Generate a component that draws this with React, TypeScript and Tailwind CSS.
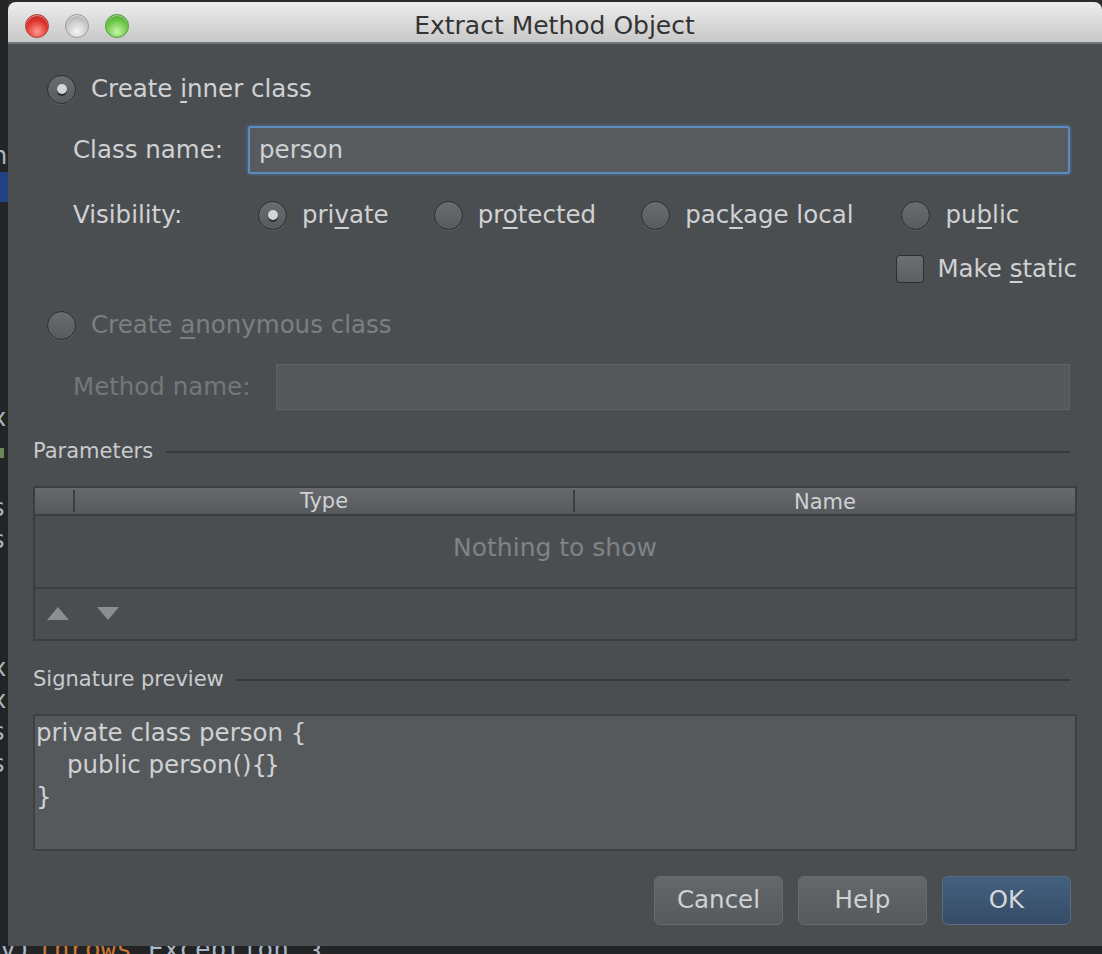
import React from 'react'

const font = "font-['DejaVu_Sans',sans-serif]"

function Radio({ checked = false }: { checked?: boolean }) {
  return (
    <span className="flex h-[29px] w-[29px] shrink-0 items-center justify-center rounded-full border border-[#2c2e30] bg-gradient-to-b from-[#6a6d70] to-[#585b5e] shadow-[0_1px_0_#5a5d60]">
      {checked && (
        <span className="h-[10px] w-[10px] rounded-full bg-[#d4d5d6] shadow-[0_2px_0_0_#2a2b2c]" />
      )}
    </span>
  )
}

function Mn({ children }: { children: React.ReactNode }) {
  return (
    <span className="underline decoration-[2px] underline-offset-[4px]">
      {children}
    </span>
  )
}

function SectionTitle({ title, lineFrom }: { title: string; lineFrom: string }) {
  return (
    <div className="flex h-[30px] items-center pr-[7px]">
      <span className="text-[21px] text-[#c9cbcd]">{title}</span>
      <span className={`${lineFrom} h-[2px] flex-1 bg-[#36383a]`} />
    </div>
  )
}

function Button({ label, primary = false }: { label: string; primary?: boolean }) {
  return (
    <button
      className={
        primary
          ? 'flex h-[49px] w-[129px] items-center justify-center rounded-[6px] border border-[#586b82] bg-gradient-to-b from-[#43607f] to-[#364c67] text-[24.5px] text-[#d6d8da]'
          : 'flex h-[49px] w-[129px] items-center justify-center rounded-[6px] border border-[#686b6e] bg-gradient-to-b from-[#64686b] to-[#575a5d] text-[24.5px] text-[#cfd1d3]'
      }
    >
      {label}
    </button>
  )
}

function Arrow({ up }: { up?: boolean }) {
  return (
    <svg width="22" height="13" viewBox="0 0 22 13">
      <path d={up ? 'M0 13 L11 0 L22 13 Z' : 'M0 0 L22 0 L11 13 Z'} fill="#8c8e90" />
    </svg>
  )
}

export default function App() {
  return (
    <div className={`${font} flex h-[954px] w-[1102px] flex-col overflow-hidden bg-[#2b2b2b]`}>
      <div className="flex h-[946px]">
        {/* editor strip behind the dialog */}
        <div className="flex w-[8px] shrink-0 flex-col overflow-hidden bg-[#232425] pt-[140px] text-[24px] leading-[32px] text-[#a9b7c6]">
          <div className="-ml-[8px]">n</div>
          <div className="h-[30px] w-[8px] bg-[#214283]" />
          <div className="h-[200px]" />
          <div className="-ml-[8px]">x</div>
          <div className="mt-[14px] h-[10px] w-[4px] bg-[#6a8759]" />
          <div className="mt-[34px] -ml-[8px]">s</div>
          <div className="-ml-[8px]">s</div>
          <div className="h-[96px]" />
          <div className="-ml-[8px]">x</div>
          <div className="-ml-[8px]">x</div>
          <div className="-ml-[8px]">s</div>
          <div className="-ml-[8px]">s</div>
          <div className="-ml-[8px]">)</div>
        </div>

        {/* dialog window */}
        <div className="mt-[2px] flex flex-1 flex-col overflow-hidden rounded-t-[8px] bg-[#4b4e51]">
          {/* title bar */}
          <div className="flex h-[42px] shrink-0 items-center border-b-2 border-[#777777] bg-gradient-to-b from-[#ededed] to-[#c8c8c8] pt-[7px]">
            <div className="flex gap-[16px] pl-[17px]">
              <span className="h-[24px] w-[24px] rounded-full border border-[#b23a35] bg-[radial-gradient(circle_at_50%_75%,#ff9b92,#e0342c_55%,#a8201a)] shadow-[inset_0_1px_1px_rgba(255,255,255,0.6)]" />
              <span className="h-[24px] w-[24px] rounded-full border border-[#9a9a9a] bg-[radial-gradient(circle_at_50%_75%,#f5f5f5,#c9c9c9_55%,#9d9d9d)] shadow-[inset_0_1px_1px_rgba(255,255,255,0.7)]" />
              <span className="h-[24px] w-[24px] rounded-full border border-[#4f9a35] bg-[radial-gradient(circle_at_50%_75%,#c8f5a8,#6cc846_55%,#3f8f25)] shadow-[inset_0_1px_1px_rgba(255,255,255,0.6)]" />
            </div>
            <span className="flex-1 pr-[122px] text-center text-[25px] text-[#333333]">
              Extract Method Object
            </span>
          </div>

          {/* body */}
          <div className="flex flex-1 flex-col px-[25px] text-[24.5px] text-[#cfd1d3]">
            {/* create inner class */}
            <div className="mt-[31px] flex h-[28px] items-center gap-[15px] pl-[14px]">
              <Radio checked />
              <span>
                Create <Mn>i</Mn>nner class
              </span>
            </div>

            <div className="mt-[23px] flex h-[48px] items-center pl-[40px] pr-[7px]">
              <span className="w-[175px] shrink-0">Class name:</span>
              <div className="flex h-[48px] flex-1 items-center rounded-[3px] border-2 border-[#5a8cc0] bg-[#585b5e] pl-[9px] shadow-[0_0_3px_1px_rgba(90,140,192,0.45)]">
                person
              </div>
            </div>

            <div className="mt-[26px] flex h-[30px] items-center pl-[40px]">
              <span className="w-[185px] shrink-0">Visibility:</span>
              <div className="flex items-center gap-[15px]">
                <Radio checked />
                <span>
                  pri<Mn>v</Mn>ate
                </span>
              </div>
              <div className="ml-[45px] flex items-center gap-[15px]">
                <Radio />
                <span>
                  pr<Mn>o</Mn>tected
                </span>
              </div>
              <div className="ml-[45px] flex items-center gap-[15px]">
                <Radio />
                <span>
                  pac<Mn>k</Mn>age local
                </span>
              </div>
              <div className="ml-[48px] flex items-center gap-[15px]">
                <Radio />
                <span>
                  pu<Mn>b</Mn>lic
                </span>
              </div>
            </div>

            <div className="mt-[25px] flex h-[28px] items-center justify-end gap-[13px]">
              <span className="h-[28px] w-[28px] rounded-[4px] border border-[#2c2e30] bg-gradient-to-b from-[#6d7073] to-[#5c5f62]" />
              <span>
                Make <Mn>s</Mn>tatic
              </span>
            </div>

            {/* anonymous class */}
            <div className="mt-[28px] flex h-[28px] items-center gap-[15px] pl-[14px] text-[#7c7f81]">
              <Radio />
              <span>
                Create <Mn>a</Mn>nonymous class
              </span>
            </div>

            <div className="mt-[25px] flex h-[46px] items-center pl-[40px] pr-[7px] text-[#74777a]">
              <span className="w-[203px] shrink-0">Method name:</span>
              <div className="h-[46px] flex-1 border border-[#606366] bg-[#55585b]" />
            </div>

            {/* parameters */}
            <div className="mt-[27px]">
              <SectionTitle title="Parameters" lineFrom="ml-[13px]" />
            </div>

            <div className="mt-[19px] flex h-[155px] flex-col border-2 border-[#3b3d3f]">
              <div className="flex h-[28px] items-stretch border-b-2 border-[#3b3d3f] bg-gradient-to-b from-[#67696c] to-[#56595c] text-[21px] leading-[28px]">
                <div className="flex w-[40px] items-center justify-end">
                  <span className="h-[22px] w-[2px] bg-[#3b3d3f]" />
                </div>
                <div className="flex flex-1 items-center">
                  <span className="flex-1 text-center">Type</span>
                  <span className="h-[22px] w-[2px] bg-[#3b3d3f]" />
                </div>
                <div className="flex-1 text-center">Name</div>
              </div>
              <div className="flex h-[73px] items-center justify-center border-b-2 border-[#3b3d3f] pb-[8px] text-[25px] text-[#808385]">
                Nothing to show
              </div>
              <div className="flex flex-1 items-center gap-[28px] pb-[2px] pl-[12px]">
                <Arrow up />
                <Arrow />
              </div>
            </div>

            {/* signature preview */}
            <div className="mt-[24px]">
              <SectionTitle title="Signature preview" lineFrom="ml-[12px]" />
            </div>

            <div className="mt-[19px] h-[137px] border-2 border-[#3e4042] bg-[#56595b] pl-[1px] pt-[1px] leading-[32px]">
              <div>private class person {'{'}</div>
              <div className="pl-[31px]">
                public person()<span className="tracking-[-3px]">{'{}'}</span>
              </div>
              <div>{'}'}</div>
            </div>

            {/* buttons */}
            <div className="mt-[25px] flex justify-end gap-[15px] pr-[6px]">
              <Button label="Cancel" />
              <Button label="Help" />
              <Button label="OK" primary />
            </div>
          </div>
        </div>
      </div>

      {/* editor text peeking below the dialog */}
      <div className="h-[8px] overflow-hidden bg-[#232425]">
        <div className="-mt-[12px] flex font-['DejaVu_Sans_Mono',monospace] text-[26px] leading-[30px]">
          <span className="w-[38px] text-[#a9b7c6]">y)</span>
          <span className="text-[#cc7832]">throws</span>
          <span className="ml-[16px] text-[#a9b7c6]">Exception</span>
          <span className="ml-[22px] text-[#a9b7c6]">{'{'}</span>
        </div>
      </div>
    </div>
  )
}
